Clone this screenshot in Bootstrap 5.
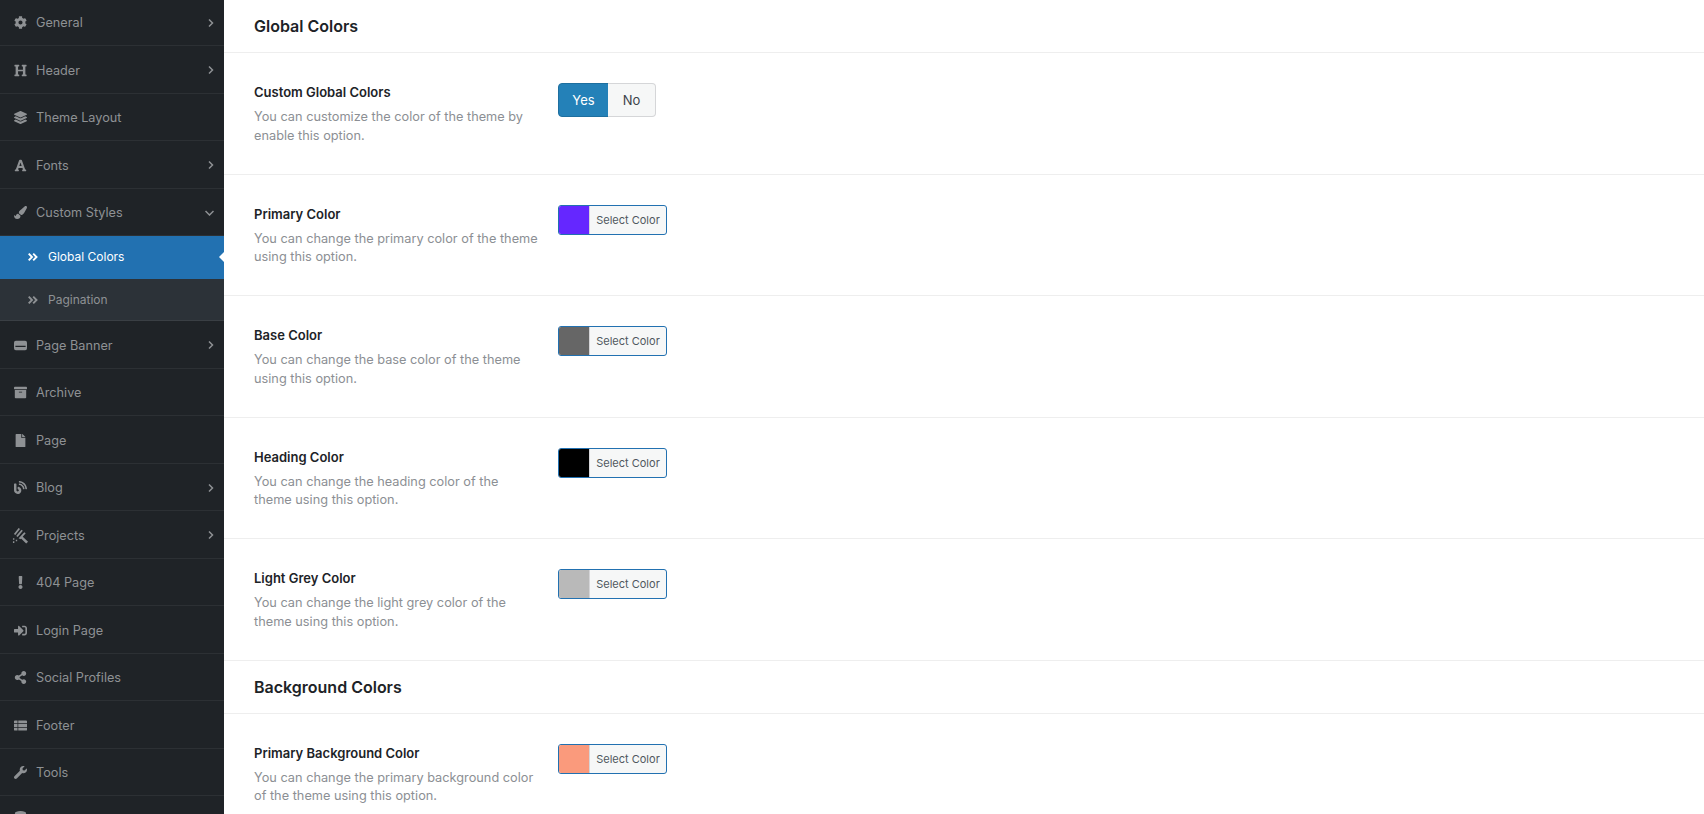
<!DOCTYPE html>
<html lang="en">
<head>
    <meta charset="UTF-8">
    <title>Theme Options</title>
    <link rel="stylesheet" href="https://cdn.jsdelivr.net/npm/bootstrap@5.3.0/dist/css/bootstrap.min.css">
    <style>
        html, body { height: 100%; overflow: hidden; }
        body { font-family: Inter, "Liberation Sans", sans-serif; background: #fff; color: #1d2327; }

        /* sidebar */
        .opt-side { width: 224px; flex: none; height: 100vh; overflow: hidden; background: #1f2327; }
        .opt-menu { margin-top: -1.5px; }
        .opt-link { height: 47.5px; padding: 2px 10px 0 14px; gap: 9px; color: #8e9194; font-size: 12.7px; border-bottom: 1px solid #2c3034; }
        .opt-link:hover { color: #8e9194; }
        .opt-link-cut { padding-top: 15px; }
        .opt-ico { width: 13px; height: 13px; flex: none; fill: #8e9194; }
        .opt-ico-wide { width: 17px; height: 17px; margin: 0 -2px 0 -2px; }
        .opt-arrow { width: 6px; height: 8px; flex: none; margin-left: auto; fill: none; stroke: #8e9194; stroke-width: 1.5; }
        .opt-arrow-down { width: 9px; height: 6px; }
        .opt-sub { height: 43px; padding: 1px 0 0 28px; gap: 10px; font-size: 12px; color: #8e9194; }
        .opt-sub svg { width: 10px; height: 8px; fill: none; stroke: #8e9194; stroke-width: 1.9; }
        .opt-sub-active { background: #2271b1; color: #fff; position: relative; padding-top: 0; padding-bottom: 2px; }
        .opt-sub-active:hover { color: #fff; }
        .opt-sub-active svg { stroke: #fff; }
        .opt-sub-active::after { content: ""; position: absolute; right: 0; top: 50%; margin-top: -6px; border: 5px solid transparent; border-right-color: #fff; border-left-width: 0; }
        .opt-sub-last { background: #2c3238; border-bottom: 1px solid #3a3f44; height: 42px; }

        /* content */
        .opt-main { height: 100vh; overflow: hidden; }
        .opt-head { height: 53px; padding: 2px 30px 0; border-bottom: 1px solid #eee; }
        .opt-head h2 { font-size: 16px; font-weight: 600; margin: 0; color: #1d2327; }
        .opt-row { height: 121.5px; padding: 30px 30px 0; border-bottom: 1px solid #eee; }
        .opt-label { width: 304px; flex: none; padding-right: 20px; }
        .opt-title { font-size: 13px; font-weight: 600; color: #1d2327; line-height: 18px; margin-bottom: 7px; }
        .opt-desc { font-size: 12.75px; line-height: 18.5px; color: #8c8f94; margin: 0; }
        .opt-toggle .btn { font-size: 13px; padding: 0; height: 34px; line-height: 32px; border-radius: 4px; }
        .opt-toggle .opt-yes { width: 51px; }
        .opt-toggle .opt-no { width: 48px; border-left: 0; }
        .opt-yes, .opt-yes:hover { background: #2481b8; border-color: #1e6f9f; color: #fff; }
        .opt-no, .opt-no:hover { background: #f6f7f7; border-color: #d5d6d8; color: #3c434a; }
        .opt-pick { display: flex; width: 109px; height: 30px; border: 1px solid #2271b1; border-radius: 3px; overflow: hidden; background: #f6f7f7; }
        .opt-swatch { width: 31px; flex: none; border-right: 1px solid #d5d5d8; }
        .opt-picklabel { flex: 1; text-align: center; font-size: 11px; line-height: 28px; color: #50575e; }
        .bg-violet { background: #6527ff; }
        .bg-base { background: #666; }
        .bg-heading { background: #000; }
        .bg-lightgrey { background: #b9b9b9; }
        .bg-peach { background: #fa9a7c; }
    </style>
</head>
<body>
<div class="d-flex">
    <aside class="opt-side">
        <nav class="nav flex-column flex-nowrap opt-menu">
            <a class="nav-link d-flex align-items-center opt-link" href="#"><svg class="opt-ico" viewBox="0 0 512 512"><path d="M487.4 315.7l-42.6-24.6c4.3-23.2 4.3-47 0-70.2l42.6-24.6c4.9-2.8 7.1-8.6 5.5-14-11.1-35.6-30-67.8-54.7-94.6-3.8-4.1-10-5.1-14.8-2.3L380.8 110c-17.9-15.4-38.5-27.3-60.8-35.1V25.8c0-5.6-3.9-10.5-9.4-11.7-36.7-8.2-74.3-7.8-109.2 0-5.5 1.2-9.4 6.1-9.4 11.7V75c-22.2 7.9-42.8 19.8-60.8 35.1L88.7 85.5c-4.9-2.8-11-1.9-14.8 2.3-24.7 26.7-43.6 58.9-54.7 94.6-1.7 5.4.6 11.2 5.5 14L67.3 221c-4.3 23.2-4.3 47 0 70.2l-42.6 24.6c-4.9 2.8-7.1 8.6-5.5 14 11.1 35.6 30 67.8 54.7 94.6 3.8 4.1 10 5.1 14.8 2.3l42.6-24.6c17.9 15.4 38.5 27.3 60.8 35.1v49.2c0 5.6 3.9 10.5 9.4 11.7 36.7 8.2 74.3 7.8 109.2 0 5.5-1.2 9.4-6.1 9.4-11.7v-49.2c22.2-7.9 42.8-19.8 60.8-35.1l42.6 24.6c4.9 2.8 11 1.9 14.8-2.3 24.7-26.7 43.6-58.9 54.7-94.6 1.5-5.5-.7-11.3-5.6-14.1zM256 336c-44.1 0-80-35.9-80-80s35.9-80 80-80 80 35.9 80 80-35.9 80-80 80z"/></svg>General<svg class="opt-arrow" viewBox="0 0 6 8"><path d="M1 .5l3.500 3.500-3.500 3.500"/></svg></a>
            <a class="nav-link d-flex align-items-center opt-link" href="#"><svg class="opt-ico" viewBox="0 0 512 512"><path d="M448 96v320h32a16 16 0 0 1 16 16v32a16 16 0 0 1-16 16H320a16 16 0 0 1-16-16v-32a16 16 0 0 1 16-16h32V288H160v128h32a16 16 0 0 1 16 16v32a16 16 0 0 1-16 16H32a16 16 0 0 1-16-16v-32a16 16 0 0 1 16-16h32V96H32a16 16 0 0 1-16-16V48a16 16 0 0 1 16-16h160a16 16 0 0 1 16 16v32a16 16 0 0 1-16 16h-32v128h192V96h-32a16 16 0 0 1-16-16V48a16 16 0 0 1 16-16h160a16 16 0 0 1 16 16v32a16 16 0 0 1-16 16z"/></svg>Header<svg class="opt-arrow" viewBox="0 0 6 8"><path d="M1 .5l3.500 3.500-3.500 3.500"/></svg></a>
            <a class="nav-link d-flex align-items-center opt-link" href="#"><svg class="opt-ico" viewBox="0 0 512 512"><path d="M12.41 148.02l232.94 105.67c6.8 3.09 14.49 3.09 21.29 0l232.94-105.67c16.55-7.51 16.55-32.52 0-40.03L266.65 2.31a25.607 25.607 0 0 0-21.29 0L12.41 107.98c-16.55 7.51-16.55 32.53 0 40.04zm487.18 88.28l-58.09-26.33-161.64 73.27c-7.56 3.43-15.59 5.17-23.86 5.17s-16.29-1.74-23.86-5.17L70.51 209.97l-58.1 26.33c-16.55 7.5-16.55 32.5 0 40l232.94 105.59c6.8 3.08 14.49 3.08 21.29 0L499.59 276.3c16.55-7.5 16.55-32.5 0-40zm0 127.8l-57.87-26.23-161.86 73.37c-7.56 3.43-15.59 5.17-23.86 5.17s-16.29-1.74-23.86-5.17L70.29 337.87 12.41 364.1c-16.55 7.5-16.55 32.5 0 40l232.94 105.59c6.8 3.08 14.49 3.08 21.29 0L499.59 404.1c16.55-7.5 16.55-32.5 0-40z"/></svg>Theme Layout</a>
            <a class="nav-link d-flex align-items-center opt-link" href="#"><svg class="opt-ico" viewBox="0 0 448 512"><path d="M432 416h-23.41L277.88 53.69A32 32 0 0 0 247.58 32h-47.16a32 32 0 0 0-30.3 21.69L39.41 416H16a16 16 0 0 0-16 16v32a16 16 0 0 0 16 16h128a16 16 0 0 0 16-16v-32a16 16 0 0 0-16-16h-19.6l23.3-64h152.6l23.3 64H304a16 16 0 0 0-16 16v32a16 16 0 0 0 16 16h128a16 16 0 0 0 16-16v-32a16 16 0 0 0-16-16zM176.85 272L224 142.51 271.15 272z"/></svg>Fonts<svg class="opt-arrow" viewBox="0 0 6 8"><path d="M1 .5l3.500 3.500-3.500 3.500"/></svg></a>
            <a class="nav-link d-flex align-items-center opt-link" href="#"><svg class="opt-ico" viewBox="0 0 512 512"><path d="M167.02 309.34c-40.12 2.58-76.53 17.86-97.19 72.3-2.35 6.21-8 9.98-14.59 9.98-11.11 0-45.46-27.67-55.25-34.35C0 439.62 37.93 512 128 512c75.86 0 128-43.77 128-120.19 0-3.11-.65-6.08-.97-9.13l-88.01-73.34zM457.89 0c-15.16 0-29.37 6.71-40.21 16.45C213.27 199.05 192 203.34 192 257.09c0 13.7 3.25 26.76 8.73 38.7l63.82 53.18c7.21 1.8 14.64 3.03 22.39 3.03 62.11 0 98.11-45.47 211.16-256.46 7.38-14.35 13.9-29.85 13.9-45.99C512 20.64 486 0 457.89 0z"/></svg>Custom Styles<svg class="opt-arrow opt-arrow-down" viewBox="0 0 9 6"><path d="M.5 1l4 4 4-4"/></svg></a>
            <a class="nav-link d-flex align-items-center opt-sub opt-sub-active" href="#"><svg viewBox="0 0 10 8"><path d="M.7.7l3.300 3.300-3.300 3.300M5.200.7l3.300 3.300-3.300 3.300"/></svg>Global Colors</a>
            <a class="nav-link d-flex align-items-center opt-sub opt-sub-last" href="#"><svg viewBox="0 0 10 8"><path d="M.7.7l3.300 3.300-3.300 3.300M5.200.7l3.300 3.300-3.300 3.300"/></svg>Pagination</a>
            <a class="nav-link d-flex align-items-center opt-link" href="#"><svg class="opt-ico" viewBox="0 0 14 14"><path fill-rule="evenodd" d="M2 2h10a2 2 0 0 1 2 2v6a2 2 0 0 1-2 2H2a2 2 0 0 1-2-2V4a2 2 0 0 1 2-2zM1.500 7.400v1.200h11V7.400z"/></svg>Page Banner<svg class="opt-arrow" viewBox="0 0 6 8"><path d="M1 .5l3.500 3.500-3.500 3.500"/></svg></a>
            <a class="nav-link d-flex align-items-center opt-link" href="#"><svg class="opt-ico" viewBox="0 0 512 512"><path d="M32 448c0 17.7 14.3 32 32 32h384c17.7 0 32-14.3 32-32V160H32v288zm160-212c0-6.6 5.4-12 12-12h104c6.6 0 12 5.4 12 12v8c0 6.6-5.4 12-12 12H204c-6.6 0-12-5.4-12-12v-8zM480 32H32C14.3 32 0 46.3 0 64v48c0 8.8 7.2 16 16 16h480c8.8 0 16-7.2 16-16V64c0-17.7-14.3-32-32-32z"/></svg>Archive</a>
            <a class="nav-link d-flex align-items-center opt-link" href="#"><svg class="opt-ico" viewBox="0 0 384 512"><path d="M224 136V0H24C10.7 0 0 10.7 0 24v464c0 13.3 10.7 24 24 24h336c13.3 0 24-10.7 24-24V160H248c-13.2 0-24-10.8-24-24zm160-14.1v6.1H256V0h6.1c6.4 0 12.5 2.5 17 7l97.9 98c4.5 4.5 7 10.6 7 16.9z"/></svg>Page</a>
            <a class="nav-link d-flex align-items-center opt-link" href="#"><svg class="opt-ico" viewBox="0 0 512 512"><path d="M172.2 226.8c-14.6-2.9-28.2 8.9-28.2 23.8V301c0 10.2 7.1 18.4 16.7 22 18.2 6.8 31.3 24.4 31.3 45 0 26.5-21.5 48-48 48s-48-21.5-48-48V120c0-13.3-10.7-24-24-24H24c-13.3 0-24 10.7-24 24v248c0 89.5 82.1 160.2 175 140.7 54.4-11.4 98.3-55.4 109.7-109.7 17.4-82.9-37-157.2-112.5-172.2zM209 0c-9.2-.5-17 6.8-17 16v31.6c0 8.5 6.6 15.5 15 15.9 129.4 7 233.1 111.7 240.9 241.5.5 8.4 7.5 15 15.9 15h32.1c9.2 0 16.5-7.8 16-17C503.4 139.8 372.2 8.6 209 0zm.3 96c-9.3-.7-17.3 6.7-17.3 16.1v32.1c0 8.4 6.5 15.3 14.8 15.9 76.8 6.3 138 68.2 144.9 145.2.8 8.3 7.6 14.7 15.9 14.7h32.2c9.3 0 16.8-8 16.1-17.3-8.4-110.1-96.5-198.2-206.6-206.7z"/></svg>Blog<svg class="opt-arrow" viewBox="0 0 6 8"><path d="M1 .5l3.500 3.500-3.500 3.500"/></svg></a>
            <a class="nav-link d-flex align-items-center opt-link" href="#"><svg class="opt-ico opt-ico-wide" viewBox="0 0 18 18"><path d="M2 7.500L7 1l1.500 1L3.500 8.500zM4.500 9.500L10 3l1.500 1L6 10.500zM7 12l6-6.500 1.500 1L9 13zM10 9l7 6.500-2 2L8.500 11zM1 12h1.500v1.500H1zM1 15h1.500v2H1zM4 13.500h1.500V15H4z"/></svg>Projects<svg class="opt-arrow" viewBox="0 0 6 8"><path d="M1 .5l3.500 3.500-3.500 3.500"/></svg></a>
            <a class="nav-link d-flex align-items-center opt-link" href="#"><svg class="opt-ico" viewBox="0 0 192 512"><path d="M176 432c0 44.112-35.888 80-80 80s-80-35.888-80-80 35.888-80 80-80 80 35.888 80 80zM25.26 25.199l13.6 272C39.499 309.972 50.041 320 62.83 320h66.34c12.789 0 23.331-10.028 23.97-22.801l13.6-272C167.425 11.49 156.496 0 142.77 0H49.23C35.504 0 24.575 11.49 25.26 25.199z"/></svg>404 Page</a>
            <a class="nav-link d-flex align-items-center opt-link" href="#"><svg class="opt-ico" viewBox="0 0 512 512"><path d="M416 448h-84c-6.6 0-12-5.4-12-12v-40c0-6.6 5.4-12 12-12h84c17.7 0 32-14.3 32-32V160c0-17.7-14.3-32-32-32h-84c-6.6 0-12-5.4-12-12V76c0-6.6 5.4-12 12-12h84c53 0 96 43 96 96v192c0 53-43 96-96 96zm-47-201L201 79c-15-15-41-4.5-41 17v96H24c-13.3 0-24 10.7-24 24v96c0 13.3 10.7 24 24 24h136v96c0 21.500 26 32 41 17l168-168c9.3-9.4 9.3-24.600 0-34z"/></svg>Login Page</a>
            <a class="nav-link d-flex align-items-center opt-link" href="#"><svg class="opt-ico" viewBox="0 0 448 512"><path d="M352 320c-22.608 0-43.387 7.819-59.79 20.895l-102.486-64.054a96.551 96.551 0 0 0 0-41.683l102.486-64.054C308.613 184.181 329.392 192 352 192c53.019 0 96-42.981 96-96S405.019 0 352 0s-96 42.981-96 96c0 7.158.79 14.13 2.276 20.841L155.79 180.895C139.387 167.819 118.608 160 96 160c-53.019 0-96 42.981-96 96s42.981 96 96 96c22.608 0 43.387-7.819 59.79-20.895l102.486 64.054A96.301 96.301 0 0 0 256 416c0 53.019 42.981 96 96 96s96-42.981 96-96-42.981-96-96-96z"/></svg>Social Profiles</a>
            <a class="nav-link d-flex align-items-center opt-link" href="#"><svg class="opt-ico" viewBox="0 0 14 14"><path d="M1 1.500h2.800v3H0v-2a1 1 0 0 1 1-1zM4.600 1.500H13a1 1 0 0 1 1 1v2H4.600zM0 5.300h3.800v3.400H0zM4.600 5.300H14v3.400H4.600zM0 9.500h3.800v3H1a1 1 0 0 1-1-1zM4.600 9.500H14v2a1 1 0 0 1-1 1H4.600z"/></svg>Footer</a>
            <a class="nav-link d-flex align-items-center opt-link" href="#"><svg class="opt-ico" viewBox="0 0 512 512"><path d="M507.73 109.1c-2.24-9.03-13.54-12.09-20.12-5.51l-74.36 74.36-67.88-11.31-11.31-67.88 74.36-74.36c6.62-6.62 3.43-17.9-5.66-20.16-47.38-11.74-99.55.91-136.58 37.93-39.64 39.64-50.55 97.1-34.05 147.2L18.74 402.76c-24.99 24.99-24.99 65.51 0 90.5 24.99 24.99 65.51 24.99 90.5 0l213.21-213.21c50.12 16.71 107.47 5.68 147.37-34.22 37.07-37.07 49.7-89.32 37.91-136.73z"/></svg>Tools</a>
            <a class="nav-link d-flex align-items-start opt-link opt-link-cut" href="#"><svg class="opt-ico" viewBox="0 0 14 14"><path d="M7 0C3.500 0 1 1 1 2.500v9C1 13 3.500 14 7 14s6-1 6-2.500v-9C13 1 10.500 0 7 0z"/></svg></a>
        </nav>
    </aside>

    <main class="opt-main flex-grow-1">
        <div class="opt-head d-flex align-items-center"><h2>Global Colors</h2></div>

        <div class="opt-row d-flex">
            <div class="opt-label">
                <div class="opt-title">Custom Global Colors</div>
                <p class="opt-desc">You can customize the color of the theme by enable this option.</p>
            </div>
            <div class="btn-group opt-toggle align-self-start">
                <button type="button" class="btn opt-yes">Yes</button>
                <button type="button" class="btn opt-no">No</button>
            </div>
        </div>

        <div class="opt-row d-flex">
            <div class="opt-label">
                <div class="opt-title">Primary Color</div>
                <p class="opt-desc">You can change the primary color of the theme using this option.</p>
            </div>
            <div class="opt-pick"><span class="opt-swatch bg-violet"></span><span class="opt-picklabel">Select Color</span></div>
        </div>

        <div class="opt-row d-flex">
            <div class="opt-label">
                <div class="opt-title">Base Color</div>
                <p class="opt-desc">You can change the base color of the theme using this option.</p>
            </div>
            <div class="opt-pick"><span class="opt-swatch bg-base"></span><span class="opt-picklabel">Select Color</span></div>
        </div>

        <div class="opt-row d-flex">
            <div class="opt-label">
                <div class="opt-title">Heading Color</div>
                <p class="opt-desc">You can change the heading color of the theme using this option.</p>
            </div>
            <div class="opt-pick"><span class="opt-swatch bg-heading"></span><span class="opt-picklabel">Select Color</span></div>
        </div>

        <div class="opt-row d-flex">
            <div class="opt-label">
                <div class="opt-title">Light Grey Color</div>
                <p class="opt-desc">You can change the light grey color of the theme using this option.</p>
            </div>
            <div class="opt-pick"><span class="opt-swatch bg-lightgrey"></span><span class="opt-picklabel">Select Color</span></div>
        </div>

        <div class="opt-head d-flex align-items-center"><h2>Background Colors</h2></div>

        <div class="opt-row d-flex">
            <div class="opt-label">
                <div class="opt-title">Primary Background Color</div>
                <p class="opt-desc">You can change the primary background color of the theme using this option.</p>
            </div>
            <div class="opt-pick"><span class="opt-swatch bg-peach"></span><span class="opt-picklabel">Select Color</span></div>
        </div>
    </main>
</div>
<script src="https://cdn.jsdelivr.net/npm/bootstrap@5.3.0/dist/js/bootstrap.bundle.min.js"></script>
</body>
</html>
